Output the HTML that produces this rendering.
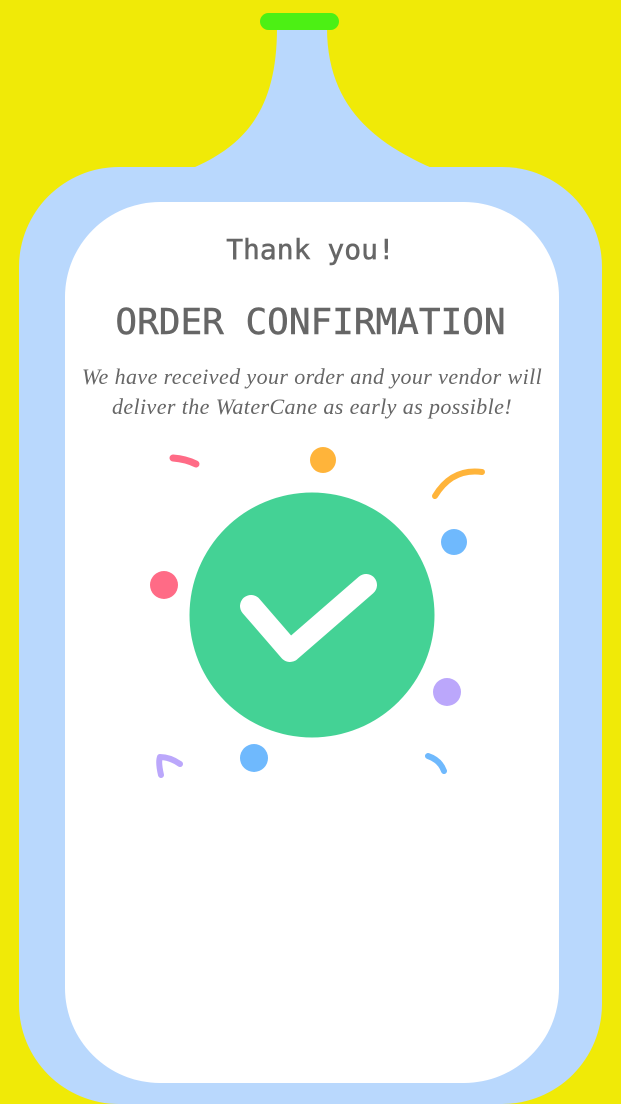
<!DOCTYPE html>
<html><head><meta charset="utf-8"><style>
html,body{margin:0;padding:0;}
body{width:621px;height:1104px;background:#f0ea07;position:relative;overflow:hidden;}
.body{position:absolute;left:19px;top:167px;width:583px;height:937px;background:#b9d8fd;border-radius:100px;}
.inner{position:absolute;left:65px;top:202px;width:494px;height:881px;background:#fff;border-radius:95px;}
.t{position:absolute;left:0;width:621px;text-align:center;color:#666;font-family:"DejaVu Sans Mono","Liberation Mono",monospace;-webkit-text-stroke:0.5px #666;}
.s{position:absolute;left:40px;width:544px;text-align:center;color:#666;font-family:"Liberation Serif",serif;font-style:italic;font-size:22px;letter-spacing:0.4px;line-height:30px;top:362px;}
</style></head><body>
<svg style="position:absolute;left:0;top:0" width="621" height="200">
<path d="M277,28 C277,110 245,145 193,168 L432,168 C380,145 327,110 327,28 Z" fill="#b9d8fd"/>
<rect x="260" y="13" width="79" height="17" rx="8.5" fill="#4cf014"/>
</svg>
<div class="body"></div>
<div class="inner"></div>
<div class="t" style="top:232px;font-size:28px;line-height:36px;">Thank you!</div>
<div class="t" style="top:301px;font-size:36px;line-height:44px;">ORDER CONFIRMATION</div>
<div class="s">We have received your order and your vendor will<br>deliver the WaterCane as early as possible!</div>
<svg style="position:absolute;left:0;top:0" width="621" height="1104">
<circle cx="312" cy="615" r="122.5" fill="#44d295"/>
<polyline points="251,606 290,651 366,585" fill="none" stroke="#fff" stroke-width="22" stroke-linecap="round" stroke-linejoin="round"/>
<circle cx="323" cy="460" r="13" fill="#ffb43a"/>
<circle cx="454" cy="542" r="13" fill="#6fb9fd"/>
<circle cx="164" cy="585" r="14" fill="#ff6b86"/>
<circle cx="447" cy="692" r="14" fill="#bba7fb"/>
<circle cx="254" cy="758" r="14" fill="#6fb9fd"/>
<path d="M173,458 Q186,459 196,464" fill="none" stroke="#ff6b86" stroke-width="7" stroke-linecap="round"/>
<path d="M435,496 Q452,468 482,472" fill="none" stroke="#ffb43a" stroke-width="6" stroke-linecap="round"/>
<path d="M161,775 Q158,762 160,757 Q170,757 180,764" fill="none" stroke="#bba7fb" stroke-width="6" stroke-linecap="round" stroke-linejoin="round"/>
<path d="M428,756 Q440,760 444,771" fill="none" stroke="#6fb9fd" stroke-width="6" stroke-linecap="round"/>
</svg>
</body></html>
